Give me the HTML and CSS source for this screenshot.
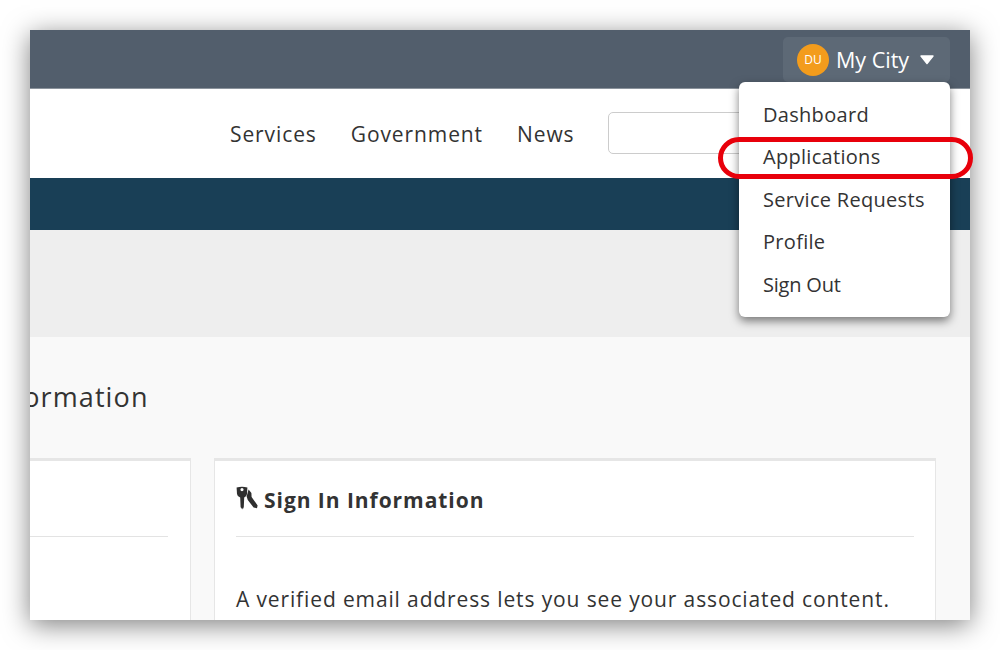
FILE: index.html
```html
<!DOCTYPE html>
<html lang="en">
<head>
<meta charset="utf-8">
<title>My City</title>
<link rel="stylesheet" href="styles.css">
</head>
<body>
<div class="window">
  <header class="topbar">
    <button class="city-btn">
      <span class="avatar">DU</span>
      <span class="city-label">My City</span>
      <svg class="caret" viewBox="0 0 14 10" width="14" height="10" aria-hidden="true"><path fill="#fff" stroke="#fff" stroke-width="1.4" stroke-linejoin="round" d="M1 1 H13 L7 8.6 Z"/></svg>
    </button>
  </header>
  <nav class="navbar">
    <a class="nav-link">Services</a>
    <a class="nav-link">Government</a>
    <a class="nav-link">News</a>
    <div class="search"></div>
  </nav>
  <div class="bluebar"></div>
  <div class="hero"></div>
  <main class="content">
    <h1 class="page-title">Account Information</h1>
    <div class="cards">
      <section class="card card-left"><div class="card-rule"></div></section>
      <section class="card card-right">
        <h2 class="card-title">
          <svg class="keys" viewBox="0 0 22 24" width="22" height="24" aria-hidden="true">
            <path fill="#2f2f2f" fill-rule="evenodd" d="M0.6 1.5 Q6 0 11.4 1.5 L11 8 Q10.6 10.8 8.2 11.6 L7.8 21 L6.8 23.4 L5.9 21.5 L5.5 23 L4.6 21 L4.2 11.6 Q1.4 10.8 1 8 Z M4.4 3.6 a1.6 1.6 0 1 0 3.2 0 a1.6 1.6 0 1 0 -3.2 0 Z"/>
            <path fill="#2f2f2f" d="M12.6 3.6 L15.4 7 L15.6 11 L21.6 19.4 L21 22.2 L17.6 21.4 L11.8 14 L10.6 10.4 Z"/>
          </svg>
          <span>Sign In Information</span>
        </h2>
        <div class="card-rule"></div>
        <p class="card-text">A verified email address lets you see your associated content.</p>
      </section>
    </div>
  </main>
  <ul class="menu">
    <li class="menu-item">Dashboard</li>
    <li class="menu-item">Applications</li>
    <li class="menu-item">Service Requests</li>
    <li class="menu-item">Profile</li>
    <li class="menu-item menu-item-tight">Sign Out</li>
  </ul>
</div>
<div class="callout"></div>
</body>
</html>
```

FILE: styles.css
```css
* { box-sizing: border-box; }
html, body { margin: 0; height: 100%; }
body {
  background: #fff;
  padding: 30px;
  font-family: "Open Sans", sans-serif;
  color: #333;
  overflow: hidden;
  position: relative;
}
.window {
  position: relative;
  width: 940px;
  height: 590px;
  display: flex;
  flex-direction: column;
  box-shadow: 0 5px 25px rgba(0, 0, 0, 0.5);
  background: #fff;
  overflow: hidden;
}
.topbar {
  flex: 0 0 59px;
  background: #525e6c;
  border-bottom: 1px solid #8b939c;
  display: flex;
  justify-content: flex-end;
  padding: 7px 20px 0 0;
}
.city-btn {
  width: 167px;
  height: 45px;
  border: 0;
  border-radius: 5px;
  background: #5d6976;
  color: #fff;
  display: flex;
  align-items: center;
  padding: 0 0 0 14px;
  font: 400 21.5px "Open Sans", sans-serif;
}
.avatar {
  width: 32px;
  height: 32px;
  border-radius: 50%;
  background: #f39c1c;
  color: #fff;
  font-size: 12px;
  display: flex;
  align-items: center;
  justify-content: center;
  margin-right: 7px;
}
.city-label { margin-right: 11px; white-space: nowrap; }
.caret { flex: none; }
.navbar {
  flex: 0 0 89px;
  display: flex;
  align-items: center;
  padding-left: 200px;
  background: #fff;
}
.nav-link {
  font-size: 21px;
  letter-spacing: 0.9px;
  color: #333;
  margin-right: 34px;
}
.search {
  width: 200px;
  height: 42px;
  margin-top: -2px;
  border: 1px solid #ccc;
  border-radius: 5px;
}
.bluebar { flex: 0 0 52px; background: #193f56; }
.hero { flex: 0 0 107px; background: #eeeeee; }
.content {
  flex: 1;
  background: #f9f9f9;
  padding: 39px 0 0 0;
  min-height: 0;
}
.page-title {
  margin: 0 0 0 -161px;
  font-size: 27px;
  line-height: 42px;
  font-weight: 400;
  letter-spacing: 1.1px;
  color: #333;
  white-space: nowrap;
}
.cards {
  display: flex;
  gap: 23px;
  margin-top: 40px;
  height: 200px;
  align-items: stretch;
}
.card {
  background: #fff;
  border: 1px solid #e6e6e6;
  border-top: 3px solid #e6e6e6;
  border-bottom: 0;
}
.card-left {
  width: 161px;
  border-left: 0;
  padding-top: 75px;
  padding-right: 22px;
}
.card-right { width: 722px; padding: 24px 21px 0; }
.card-rule { height: 1px; background: #e3e3e3; }
.card-title {
  margin: 0;
  height: 51px;
  display: flex;
  align-items: flex-start;
  gap: 6px;
  font-size: 21px;
  line-height: 30px;
  font-weight: 700;
  letter-spacing: 0.95px;
  color: #333;
}
.keys { flex: none; margin-top: 1px; }
.card-text {
  margin: 47px 0 0;
  font-size: 21px;
  line-height: 30px;
  letter-spacing: 0.87px;
  color: #333;
  white-space: nowrap;
}
.menu {
  position: absolute;
  top: 52px;
  left: 709px;
  width: 211px;
  height: 235px;
  margin: 0;
  padding: 11.7px 0 0;
  list-style: none;
  background: #fff;
  border-radius: 6px;
  box-shadow: 0 4px 10px rgba(0, 0, 0, 0.5);
}
.menu-item {
  height: 42.5px;
  padding-left: 24px;
  font-size: 20px;
  line-height: 42.5px;
  letter-spacing: 0.3px;
  color: #333;
  white-space: nowrap;
}
.menu-item-tight { letter-spacing: -0.2px; }
.callout {
  position: absolute;
  left: 718px;
  top: 137px;
  width: 255px;
  height: 42px;
  border: 5px solid #e8000b;
  border-radius: 21px;
}
```
